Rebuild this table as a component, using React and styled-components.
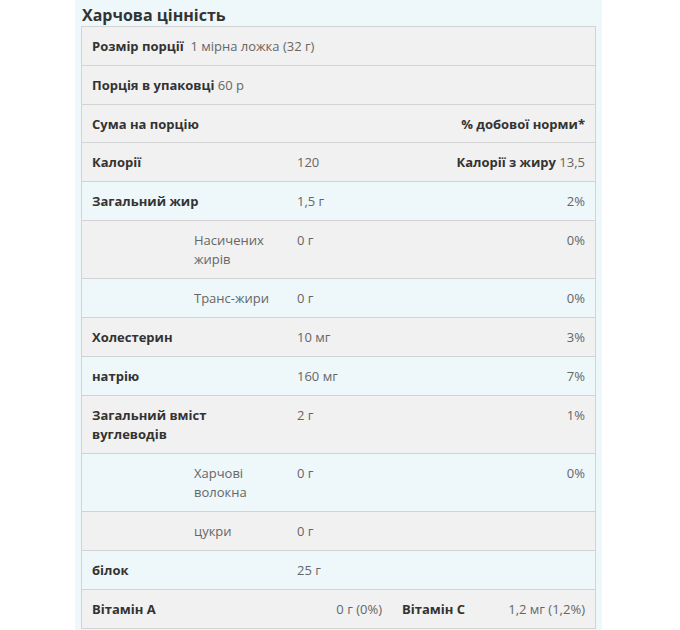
import React from "react";
import styled, { createGlobalStyle } from "styled-components";

const Global = createGlobalStyle`
  html, body { margin: 0; padding: 0; background: #ffffff; }
  body { font-family: "Open Sans", "Noto Sans", sans-serif; }
`;

const Panel = styled.section`
  margin-left: 75px;
  width: 527px;
  min-height: 630px;
  box-sizing: border-box;
  padding: 4px 6px 0 6px;
  background: #eef7f9;
`;

const Title = styled.h2`
  margin: 0;
  padding-left: 1px;
  font-size: 16px;
  line-height: 22px;
  font-weight: 700;
  color: #333333;
`;

const Table = styled.div`
  border: 1px solid #d3d3d3;
  border-bottom: none;
`;

const Row = styled.div`
  display: grid;
  grid-template-columns: 102px 103px 105px 1fr;
  align-items: start;
  background: ${(p) => (p.$tone === "blue" ? "#eef7f9" : "#f1f1f1")};
  border-bottom: 1px solid #d3d3d3;
  font-size: 13px;
  line-height: 19.5px;
`;

const Cell = styled.div`
  padding: 10px 10px 8.3px 10px;
  grid-column: ${(p) => p.$col || "auto"};
  text-align: ${(p) => (p.$right ? "right" : "left")};
  color: ${(p) => (p.$bold ? "#333333" : "#666666")};
  font-weight: ${(p) => (p.$bold ? 700 : 400)};
  display: ${(p) => (p.$split ? "flex" : "block")};
  justify-content: space-between;
`;

const B = styled.span`
  font-weight: 700;
  color: #333333;
`;

const V = styled.span`
  font-weight: 400;
  color: #666666;
`;

const main = [
  { label: "Загальний жир", value: "1,5 г", pct: "2%" },
  { sub: "Насичених жирів", value: "0 г", pct: "0%" },
  { sub: "Транс-жири", value: "0 г", pct: "0%" },
  { label: "Холестерин", value: "10 мг", pct: "3%" },
  { label: "натрію", value: "160 мг", pct: "7%" },
  { label: "Загальний вміст вуглеводів", value: "2 г", pct: "1%" },
  { sub: "Харчові волокна", value: "0 г", pct: "0%" },
  { sub: "цукри", value: "0 г", pct: "" },
  { label: "білок", value: "25 г", pct: "" },
];

export default function App() {
  return (
    <>
      <Global />
      <Panel>
        <Title>Харчова цінність</Title>
        <Table>
          <Row>
            <Cell $col="1 / 5">
              <B>Розмір порції</B>&nbsp; <V>1 мірна ложка (32 г)</V>
            </Cell>
          </Row>
          <Row>
            <Cell $col="1 / 5">
              <B>Порція в упаковці</B> <V>60 р</V>
            </Cell>
          </Row>
          <Row>
            <Cell $col="1 / 3" $bold>Сума на порцію</Cell>
            <Cell $col="3 / 5" $right $bold>% добової норми*</Cell>
          </Row>
          <Row>
            <Cell $col="1 / 3" $bold>Калорії</Cell>
            <Cell $col="3">120</Cell>
            <Cell $col="4" $right>
              <B>Калорії з жиру</B> <V>13,5</V>
            </Cell>
          </Row>
          {main.map((r, i) => (
            <Row key={i} $tone={i % 2 === 0 ? "blue" : "grey"}>
              {r.sub ? (
                <Cell $col="2">{r.sub}</Cell>
              ) : (
                <Cell $col="1 / 3" $bold>{r.label}</Cell>
              )}
              <Cell $col="3">{r.value}</Cell>
              <Cell $col="4" $right>{r.pct || "\u00a0"}</Cell>
            </Row>
          ))}
          <Row>
            <Cell $col="1 / 3" $bold>Вітамін A</Cell>
            <Cell $col="3" $right>0 г (0%)</Cell>
            <Cell $col="4" $split>
              <B>Вітамін C</B>
              <V>1,2 мг (1,2%)</V>
            </Cell>
          </Row>
        </Table>
      </Panel>
    </>
  );
}
